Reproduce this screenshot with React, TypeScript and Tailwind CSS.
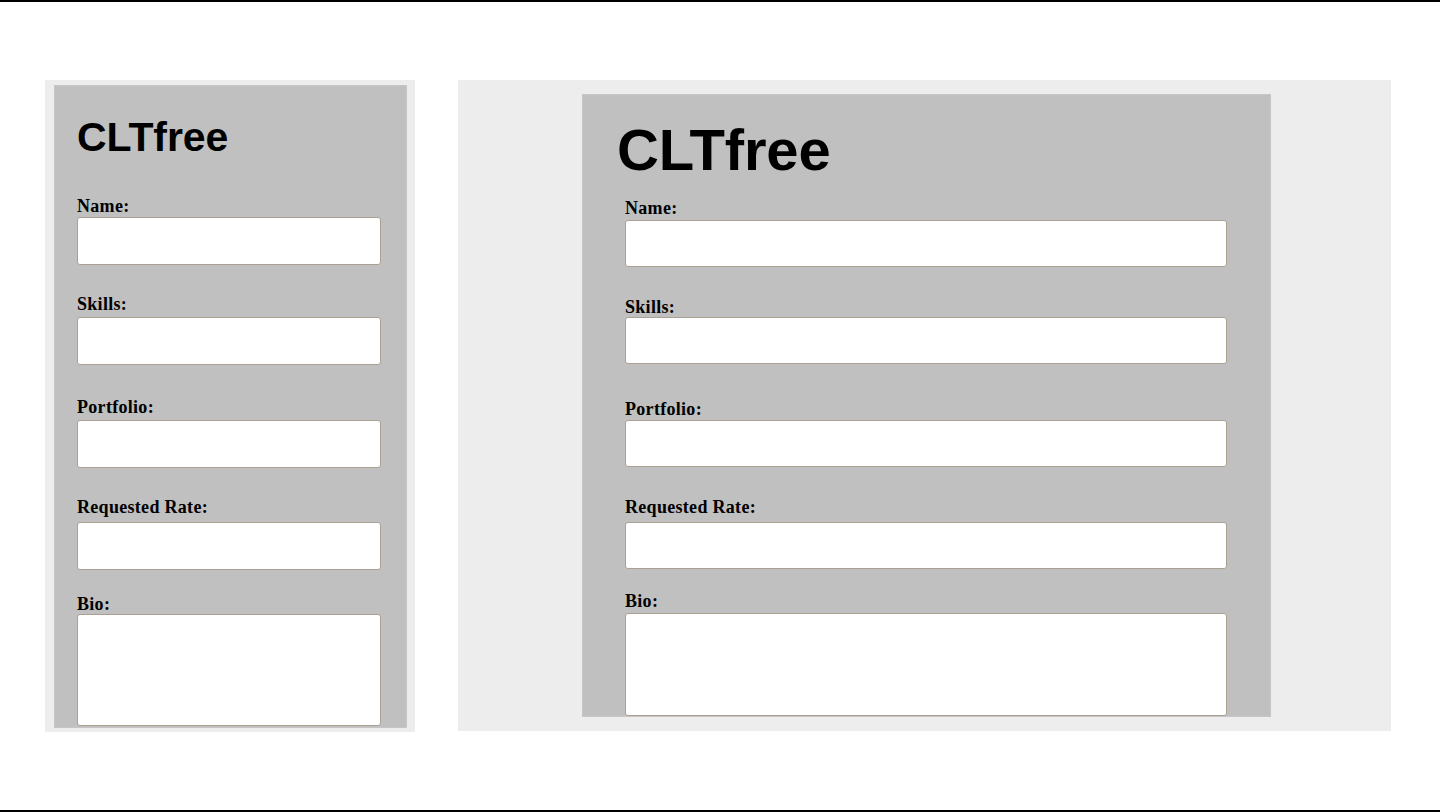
import React from 'react'

interface FieldProps {
  label: string
  labelClass: string
  inputClass: string
  multiline?: boolean
}

function Field({ label, labelClass, inputClass, multiline }: FieldProps) {
  return (
    <div>
      <label className={`block font-['Liberation_Serif',serif] text-[18px] leading-[20px] font-bold tracking-[0.3px] text-black ${labelClass}`}>
        {label}
      </label>
      {multiline ? (
        <textarea className={`block w-full resize-none rounded-[3px] border border-[#aaa193] bg-white ${inputClass}`} />
      ) : (
        <input type="text" className={`block w-full rounded-[3px] border border-[#aaa193] bg-white ${inputClass}`} />
      )}
    </div>
  )
}

function Title({ className }: { className: string }) {
  return (
    <h1 className={`font-['Liberation_Sans',Arial,sans-serif] font-bold leading-none text-black ${className}`}>
      CLTfree
    </h1>
  )
}

function MobilePreview() {
  return (
    <div className="h-[652px] w-[370px] shrink-0 bg-[#ededed] pl-[9px] pt-[5px]">
      <div className="h-[643px] w-[353px] overflow-hidden border border-[#c6c6c6] bg-[#c0c0c0] pl-[22px] pr-[25px]">
        <Title className="mt-[31px] text-[41px] tracking-[-0.1px]" />
        <Field label="Name:" labelClass="mt-[38px]" inputClass="mt-[1px] h-[48px]" />
        <Field label="Skills:" labelClass="mt-[29px]" inputClass="mt-[3px] h-[48px]" />
        <Field label="Portfolio:" labelClass="mt-[32px]" inputClass="mt-[3px] h-[48px]" />
        <Field label="Requested Rate:" labelClass="mt-[29px]" inputClass="mt-[5px] h-[48px]" />
        <Field label="Bio:" labelClass="mt-[24px]" inputClass="mt-0 h-[112px]" multiline />
      </div>
    </div>
  )
}

function DesktopPreview() {
  return (
    <div className="h-[651px] w-[933px] shrink-0 bg-[#ededed] pl-[124px] pt-[14px]">
      <div className="h-[623px] w-[689px] overflow-hidden border border-[#c6c6c6] bg-[#c0c0c0] pl-[42px] pr-[43px]">
        <Title className="-ml-[8px] mt-[26px] text-[58px] tracking-[-0.2px]" />
        <Field label="Name:" labelClass="mt-[19px]" inputClass="mt-[2px] h-[47px]" />
        <Field label="Skills:" labelClass="mt-[30px]" inputClass="mt-0 h-[47px]" />
        <Field label="Portfolio:" labelClass="mt-[35px]" inputClass="mt-[1px] h-[47px]" />
        <Field label="Requested Rate:" labelClass="mt-[30px]" inputClass="mt-[5px] h-[47px]" />
        <Field label="Bio:" labelClass="mt-[22px]" inputClass="mt-[2px] h-[103px]" multiline />
      </div>
    </div>
  )
}

export default function App() {
  return (
    <div className="h-[812px] w-full border-t-2 border-b-2 border-black bg-white">
      <div className="flex gap-[43px] pl-[45px] pt-[78px]">
        <MobilePreview />
        <DesktopPreview />
      </div>
    </div>
  )
}
